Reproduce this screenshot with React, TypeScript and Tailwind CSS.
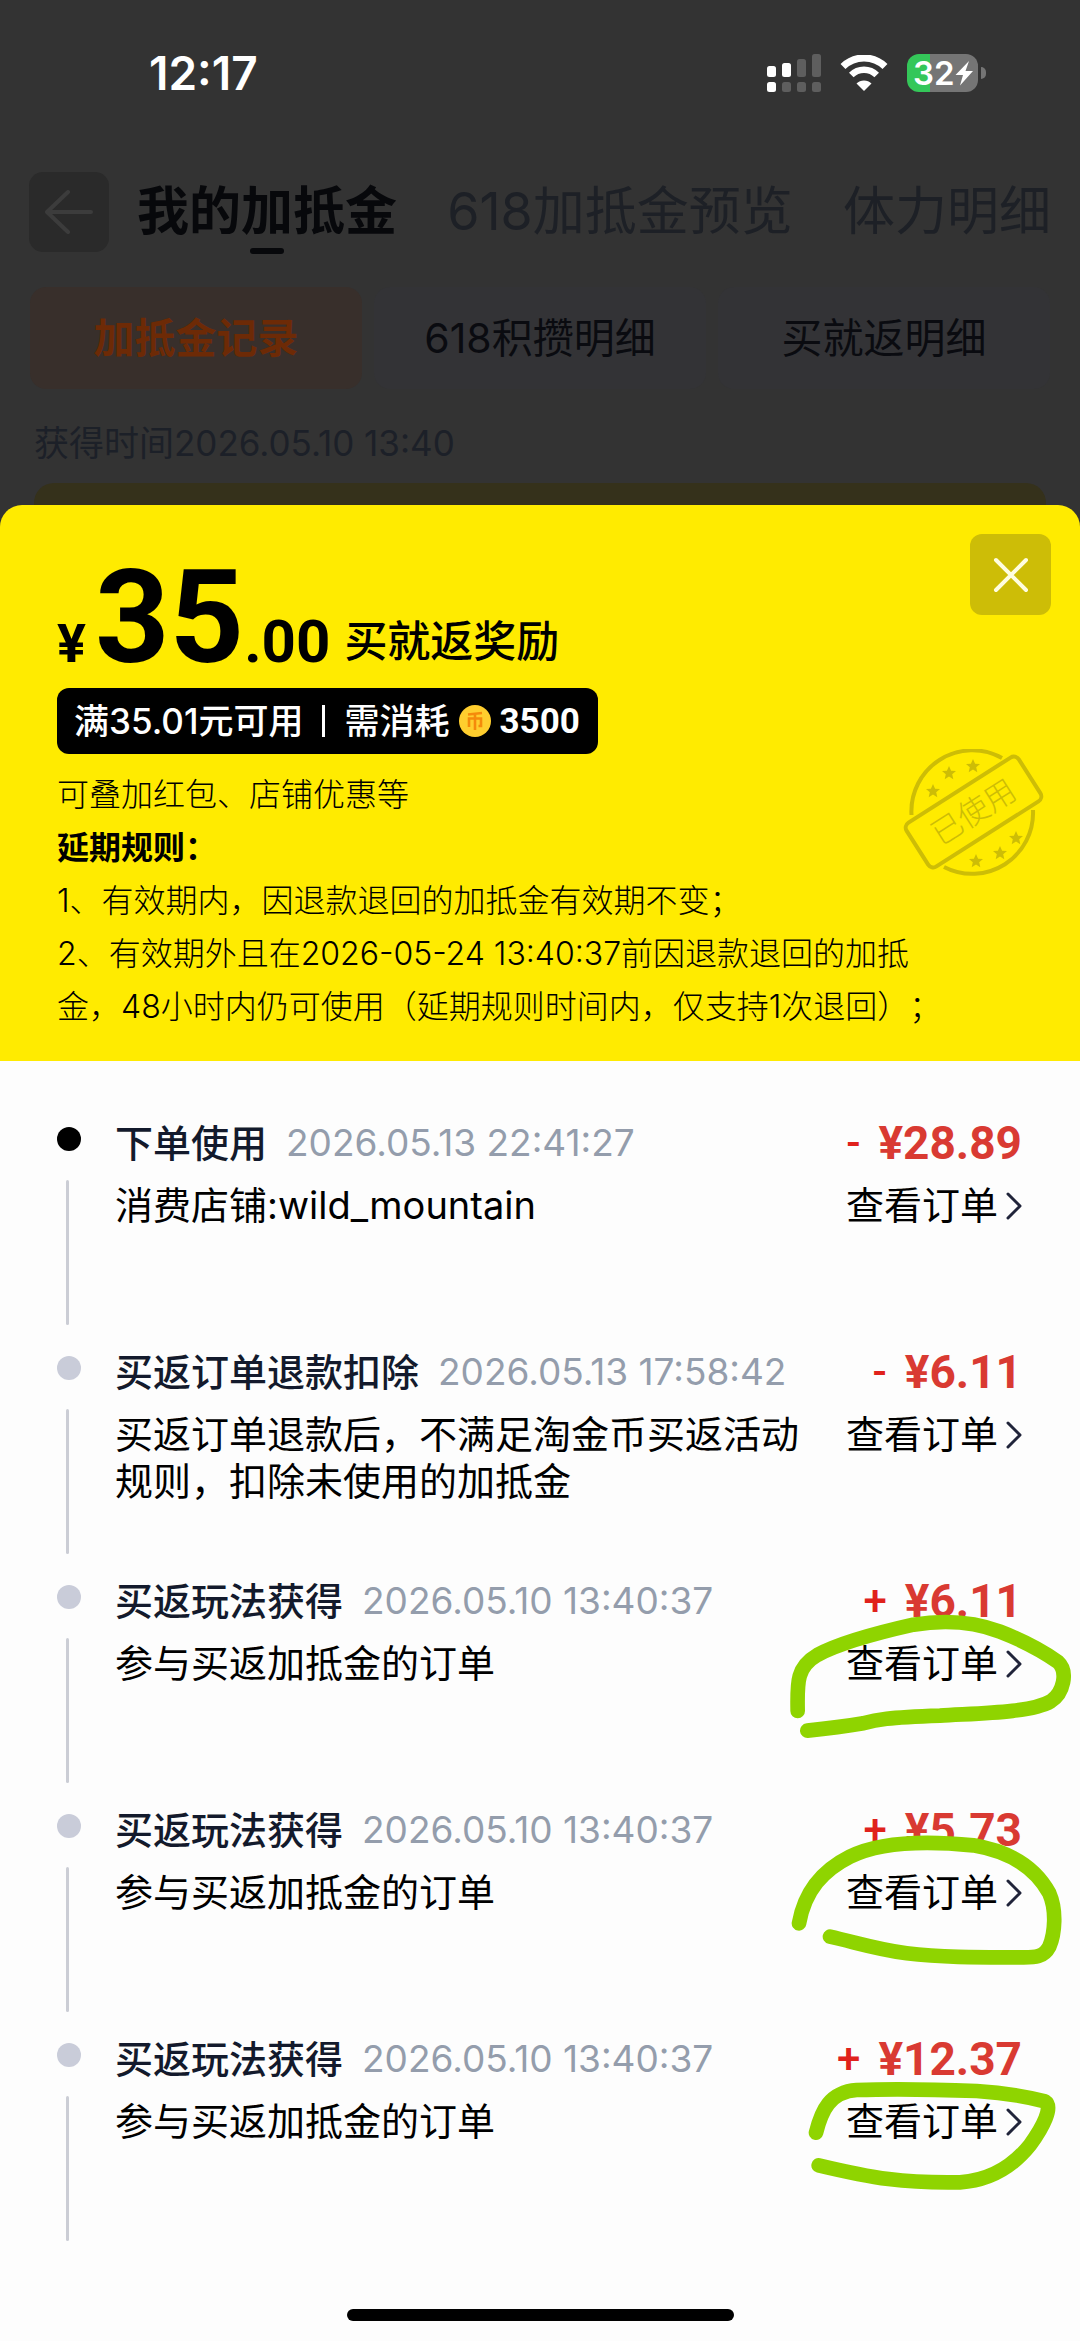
import React from "react";

type Entry = {
  title: string;
  time: string;
  detail: string;
  sign: "+" | "-";
  amount: string;
  active?: boolean;
  mark?: { d: string; dy: number };
};

const entries: Entry[] = [
  { title: "下单使用", time: "2026.05.13 22:41:27", detail: "消费店铺:wild_mountain", sign: "-", amount: "¥28.89", active: true },
  { title: "买返订单退款扣除", time: "2026.05.13 17:58:42", detail: "买返订单退款后，不满足淘金币买返活动规则，扣除未使用的加抵金", sign: "-", amount: "¥6.11" },
  {
    title: "买返玩法获得", time: "2026.05.10 13:40:37", detail: "参与买返加抵金的订单", sign: "+", amount: "¥6.11",
    mark: { dy: 0, d: "M113 513 C112 430 108 382 172 345 C240 308 380 272 460 254 C560 238 650 248 720 275 C790 302 850 335 893 365 C926 395 910 460 872 484 C810 520 640 520 540 527 C380 533 350 538 310 550 C250 560 200 566 142 572" },
  },
  {
    title: "买返玩法获得", time: "2026.05.10 13:40:37", detail: "参与买返加抵金的订单", sign: "+", amount: "¥5.73",
    mark: { dy: 33, d: "M117 430 C135 330 190 270 270 230 C370 180 520 184 640 196 C760 216 830 270 868 340 C890 390 885 460 868 500 C850 535 820 532 780 532 C640 532 540 532 440 520 C350 508 290 488 210 470" },
  },
  {
    title: "买返玩法获得", time: "2026.05.10 13:40:37", detail: "参与买返加抵金的订单", sign: "+", amount: "¥12.37",
    mark: { dy: 36, d: "M168 368 C185 300 210 246 290 240 C400 236 520 238 650 243 C730 248 800 260 855 274 C880 290 850 350 810 405 C750 480 680 512 600 517 C430 520 340 505 176 466" },
  },
];

const starPath = "M0 -7 L2.1 -2.3 L7 -2 L3.2 1.3 L4.3 6.2 L0 3.5 L-4.3 6.2 L-3.2 1.3 L-7 -2 L-2.1 -2.3 Z";
const stars = [[32, 42], [48, 24], [72, 17], [115, 89], [99, 104], [75, 112]];

function StatusBar() {
  return (
    <div className="flex h-[146px] items-center justify-between pr-[94px] pl-[149px] text-white">
      <span className="text-[46px] leading-none font-semibold">12:17</span>
      <div className="flex items-center gap-[19px]">
        <svg width="54" height="38" viewBox="0 0 54 38" aria-label="信号">
          <g fill="#fff">
            <rect x="0" y="12" width="9" height="11" rx="2.5" />
            <rect x="15" y="9" width="9" height="14" rx="2.5" />
            <rect x="0" y="28" width="9" height="10" rx="2.5" />
          </g>
          <g fill="#5e5e5e">
            <rect x="30" y="5" width="9" height="18" rx="2.5" />
            <rect x="45" y="0" width="9" height="23" rx="2.5" />
            <rect x="15" y="28" width="9" height="10" rx="2.5" />
            <rect x="30" y="28" width="9" height="10" rx="2.5" />
            <rect x="45" y="28" width="9" height="10" rx="2.5" />
          </g>
        </svg>
        <svg width="48" height="36" viewBox="0 0 48 36" fill="none" aria-label="无线网络">
          <path d="M3 11.5 A30 30 0 0 1 45 11.5" stroke="#fff" strokeWidth="7" />
          <path d="M11.3 20 A18 18 0 0 1 36.7 20" stroke="#fff" strokeWidth="6.5" />
          <path d="M24 36 L16.5 28.5 A10.6 10.6 0 0 1 31.5 28.5 Z" fill="#fff" />
        </svg>
        <div className="flex items-center gap-[3px]">
          <div className="flex h-[38px] w-[71px] items-center rounded-xl bg-[linear-gradient(to_right,#34c759_23px,#757575_23px)] pl-[6px]">
            <span className="text-[33px] leading-none font-semibold">32</span>
            <svg width="18" height="26" viewBox="0 0 18 26" fill="#fff" aria-hidden="true">
              <path d="M14 1 L0.5 15 H8 L5 25.500 L18 11 H10.500 Z" />
            </svg>
          </div>
          <span className="h-3 w-[5px] rounded-r-full bg-[#757575]" />
        </div>
      </div>
    </div>
  );
}

function Header() {
  return (
    <header className="bg-[#333333]">
      <StatusBar />
      <nav className="flex h-[132px] items-center pr-[29px] pl-[29px] text-[52px] leading-[60px] whitespace-nowrap text-[#1d2026]">
        <button aria-label="返回" className="flex size-20 shrink-0 items-center justify-center rounded-[14px] bg-[#2a2a2a]">
          <svg width="48" height="44" viewBox="0 0 48 44" fill="none" stroke="#3c3c3c" strokeWidth="4" strokeLinecap="round" strokeLinejoin="round">
            <path d="M46 22 H2 M23 2 L2 22 L23 42" />
          </svg>
        </button>
        <div className="flex flex-1 items-center justify-between pl-7">
          <a href="#mine" className="relative font-bold text-[#07080b]">
            我的加抵金
            <span className="absolute inset-x-0 -bottom-3 mx-auto h-[6px] w-[34px] rounded-full bg-[#07080b]" />
          </a>
          <a href="#preview">618加抵金预览</a>
          <a href="#energy">体力明细</a>
        </div>
      </nav>
      <div className="grid grid-cols-3 gap-3 px-[30px] pt-[9px] text-[41px] leading-[60px] text-[#0a0b10]">
        <button className="h-[102px] rounded-2xl bg-[#382f2b] font-bold text-[#6d2a06]">加抵金记录</button>
        <button className="h-[102px] rounded-2xl bg-[#333336]">618积攒明细</button>
        <button className="h-[102px] rounded-2xl bg-[#333336]">买就返明细</button>
      </div>
      <p className="px-[34px] pt-[31px] text-[35px] leading-[46px] text-[#1c2028]">获得时间2026.05.10 13:40</p>
      <div className="mx-[34px] mt-[17px] h-[22px] rounded-t-[20px] bg-[#35311b]" />
    </header>
  );
}

function Stamp() {
  return (
    <svg width="146" height="130" viewBox="0 0 146 130" fill="none" stroke="#cdbd06" aria-label="已使用" className="absolute right-[33px] bottom-[182px]">
      <path d="M10.500 66 A61 61 0 0 1 101 9" strokeWidth="4" />
      <path d="M132 61 A61 61 0 0 1 43 118" strokeWidth="4" />
      <rect x="6" y="37" width="133" height="52" rx="6" strokeWidth="4" transform="rotate(-32.500 72.500 63)" />
      <text x="72.500" y="74" textAnchor="middle" fontSize="31" fontWeight="300" fill="#cdbd06" stroke="none" transform="rotate(-32.500 72.500 63)">已使用</text>
      <g fill="#cdbd06" stroke="none">
        {stars.map(([x, y]) => (
          <path key={x} d={starPath} transform={`translate(${x} ${y})`} />
        ))}
      </g>
    </svg>
  );
}

function Coupon() {
  return (
    <section className="relative h-[556px] rounded-t-[22px] bg-[#ffeb00] px-[57px] pt-10 text-black">
      <button aria-label="关闭" className="absolute top-[29px] right-[29px] flex size-[81px] items-center justify-center rounded-xl bg-[#cdbd07]">
        <svg width="36" height="36" viewBox="0 0 36 36" stroke="#fffde0" strokeWidth="4" strokeLinecap="round">
          <path d="M3 3 L33 33 M33 3 L3 33" />
        </svg>
      </button>
      <h1 className="flex h-[143px] items-baseline font-['Roboto',sans-serif] leading-none font-bold whitespace-nowrap">
        <span className="text-[54px]">¥</span>
        <span className="pl-[9px] text-[130px] leading-[145px]">35</span>
        <span className="text-[60px]">.00</span>
        <span className="self-end pb-7 pl-[14px] font-['Noto_Sans_CJK_SC',sans-serif] text-[43px] font-medium">买就返奖励</span>
      </h1>
      <div className="flex h-[66px] w-fit items-center rounded-xl bg-black pr-[18px] pl-[17px] text-[35px] leading-none font-medium whitespace-nowrap text-white">
        满35.01元可用
        <span className="mx-[19px] h-8 w-[3px] bg-white" />
        需消耗
        <svg width="32" height="32" viewBox="0 0 32 32" fill="none" className="mx-[9px]" aria-label="金币">
          <circle cx="16" cy="16" r="16" fill="#ffce2e" />
          <path d="M9 9.500 L23 8 M10 22 V13.500 H22 V21 H19.500 M16 9 V25" stroke="#f58a0b" strokeWidth="2.600" />
        </svg>
        <span className="font-['Roboto',sans-serif] font-bold">3500</span>
      </div>
      <div className="pt-[14px] text-[32px] leading-[53px] font-light whitespace-nowrap [text-spacing-trim:space-all]">
        <p>可叠加红包、店铺优惠等</p>
        <p className="font-bold">延期规则：</p>
        <p>1、有效期内，因退款退回的加抵金有效期不变；</p>
        <p>
          2、有效期外且在2026-05-24 13:40:37前因退款退回的加抵
          <br />
          金，48小时内仍可使用（延期规则时间内，仅支持1次退回）；
        </p>
      </div>
      <Stamp />
    </section>
  );
}

function TimelineItem({ entry }: { entry: Entry }) {
  return (
    <li className="relative flex h-[229px] pr-[58px] pl-[57px]">
      <div className="flex w-[58px] shrink-0 flex-col pt-2">
        <span className={entry.active ? "size-6 rounded-full bg-black" : "size-6 rounded-full bg-[#c9ccd9]"} />
        <span className="mt-[29px] ml-[9px] h-[145px] w-[3px] rounded-full bg-[#cbcdd5]" />
      </div>
      <div className="min-w-0 flex-1">
        <div className="flex h-12 items-center justify-between text-[38px] leading-[48px] whitespace-nowrap">
          <div className="flex items-center gap-[19px]">
            <h2 className="font-medium text-[#131a2c]">{entry.title}</h2>
            <time className="text-[37px] text-[#949dac]">{entry.time}</time>
          </div>
          <div className="flex items-center gap-[18px] font-['Roboto',sans-serif] text-[46px] font-bold text-[#d93a32]">
            <span className="text-[42px] font-medium text-[#e0221c]">{entry.sign}</span>
            <span>{entry.amount}</span>
          </div>
        </div>
        <div className="flex items-start justify-between pt-[15px] text-[38px] leading-[47px] text-black">
          <p className="w-[690px]">{entry.detail}</p>
          <a href="#order" className="flex items-center gap-2 whitespace-nowrap">
            查看订单
            <svg width="16" height="28" viewBox="0 0 16 28" fill="none" stroke="#20243a" strokeWidth="3" strokeLinecap="round" strokeLinejoin="round">
              <path d="M2 2 L14 14 L2 26" />
            </svg>
          </a>
        </div>
      </div>
      {entry.mark && (
        <svg width="320" height="230" viewBox="0 0 960 690" fill="none" className="pointer-events-none absolute -top-[37px] right-0" aria-hidden="true">
          <path d={entry.mark.d} transform={`translate(0 ${entry.mark.dy})`} stroke="#8fd400" strokeWidth="44" strokeLinecap="round" strokeLinejoin="round" />
        </svg>
      )}
    </li>
  );
}

export default function App() {
  return (
    <div className="flex min-h-screen flex-col bg-[#333333] font-['Inter','Noto_Sans_CJK_SC',sans-serif]">
      <Header />
      <main className="flex flex-1 flex-col">
        <Coupon />
        <ol className="bg-[#fdfdfd] pt-[58px]">
          {entries.map((entry, i) => (
            <TimelineItem key={i} entry={entry} />
          ))}
        </ol>
        <div className="flex flex-1 items-end justify-center bg-[#fdfdfd] pt-10 pb-5">
          <div className="h-3 w-[387px] rounded-full bg-black" />
        </div>
      </main>
    </div>
  );
}
